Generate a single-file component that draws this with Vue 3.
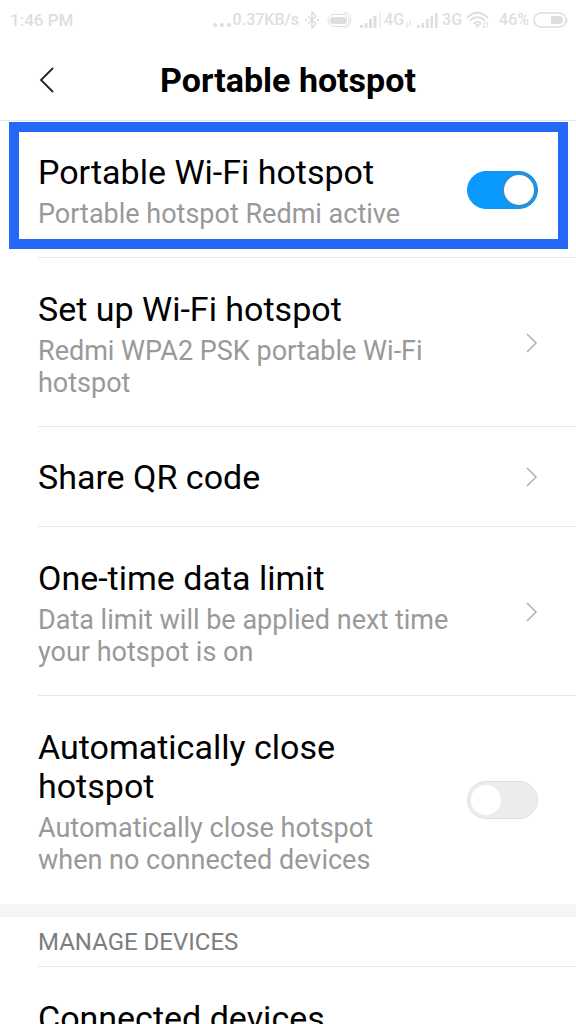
<script setup>
import { ref } from 'vue'

const hotspotOn = ref(true)
const autoClose = ref(false)
const bars = [3, 5, 9, 12, 15]
</script>

<template>
  <div class="screen">
    <div class="status">
      <span class="clock">1:46 PM</span>
      <span class="dots"><i></i><i></i><i></i></span>
      <span class="speed">0.37KB/s</span>
      <svg class="bt" width="14" height="18" viewBox="0 0 14 18" aria-hidden="true">
        <path d="M3 5l8 8-4 4V1l4 4-8 8" fill="none" stroke="currentColor" stroke-width="1.5" />
        <path d="M0 8h2v2H0zM12 8h2v2h-2z" fill="currentColor" />
      </svg>
      <svg class="vibrate" width="25" height="18" viewBox="0 0 25 18" aria-hidden="true">
        <rect x="3" y="6" width="17" height="7" rx="3" fill="currentColor" />
        <rect x="1" y="3.500" width="21" height="12" rx="6" fill="none" stroke="currentColor" />
        <path d="M17 1.500c9 0 9 15 0 15" fill="none" stroke="currentColor" />
      </svg>
      <svg class="signal" width="18" height="18" viewBox="0 0 18 18" aria-hidden="true">
        <rect v-for="(h, i) in bars.slice(0, 4)" :key="h" :x="i * 4.500" :y="17 - h" width="3" :height="h" fill="currentColor" />
      </svg>
      <svg class="divider" width="2" height="18" viewBox="0 0 2 18" aria-hidden="true">
        <path d="M1 1v15" stroke="currentColor" />
      </svg>
      <span class="net first">4G</span>
      <svg class="mini" width="6" height="18" viewBox="0 0 6 18" aria-hidden="true">
        <path d="M1 11v5M4 10v5M0 15l2 2M3 12l2-2" fill="none" stroke="currentColor" />
      </svg>
      <svg class="signal" width="21" height="18" viewBox="0 0 21 18" aria-hidden="true">
        <rect v-for="(h, i) in bars" :key="h" :x="i * 4.500" :y="17 - h" width="2.500" :height="h" fill="currentColor" />
      </svg>
      <span class="net">3G</span>
      <svg class="wifi" width="24" height="18" viewBox="0 0 24 18" aria-hidden="true">
        <path d="M1 7c6-7 15-7 21 0M4 10c4-5 11-5 15 0M7.500 13c3-3 5-3 8 0" fill="none" stroke="currentColor" stroke-width="2" />
        <path d="M9 14q2.500-2 5 0l-2.500 3z" fill="currentColor" />
        <path d="M18 11v6M21 17v-6M17 15l1 2M20 13l1-2" fill="none" stroke="currentColor" />
      </svg>
      <span class="percent">46%</span>
      <svg class="battery" width="35" height="18" viewBox="0 0 35 18" aria-hidden="true">
        <rect x="1" y="2" width="32" height="14" rx="7" fill="none" stroke="currentColor" stroke-width="1.500" />
        <path d="M18 5h8q4 0 4 4T26 13h-8z" fill="currentColor" />
        <path d="M34 7v5" stroke="currentColor" />
      </svg>
    </div>

    <header class="header">
      <button class="back" type="button" aria-label="Back">
        <svg width="16" height="28" viewBox="0 0 16 28" aria-hidden="true">
          <path d="M15 2L3 14l12 12" fill="none" stroke="#222" stroke-width="1.800" />
        </svg>
      </button>
      <h1>Portable hotspot</h1>
    </header>

    <main>
      <label class="row highlighted">
        <span class="text">
          <span class="title">Portable Wi-Fi hotspot</span>
          <span class="summary">Portable hotspot Redmi active</span>
        </span>
        <input v-model="hotspotOn" class="switch" type="checkbox" role="switch" />
      </label>

      <button class="row" type="button">
        <span class="text">
          <span class="title">Set up Wi-Fi hotspot</span>
          <span class="summary">Redmi WPA2 PSK portable Wi-Fi hotspot</span>
        </span>
        <svg class="chevron" width="12" height="22" viewBox="0 0 12 22" aria-hidden="true"><path d="M1 2l9 9-9 9" /></svg>
      </button>

      <button class="row" type="button">
        <span class="text single"><span class="title">Share QR code</span></span>
        <svg class="chevron" width="12" height="22" viewBox="0 0 12 22" aria-hidden="true"><path d="M1 2l9 9-9 9" /></svg>
      </button>

      <button class="row" type="button">
        <span class="text">
          <span class="title">One-time data limit</span>
          <span class="summary">Data limit will be applied next time your hotspot is on</span>
        </span>
        <svg class="chevron" width="12" height="22" viewBox="0 0 12 22" aria-hidden="true"><path d="M1 2l9 9-9 9" /></svg>
      </button>

      <label class="row last">
        <span class="text narrow">
          <span class="title">Automatically close hotspot</span>
          <span class="summary">Automatically close hotspot when no connected devices</span>
        </span>
        <input v-model="autoClose" class="switch" type="checkbox" role="switch" />
      </label>

      <h2>Manage devices</h2>
      <button class="row last" type="button">
        <span class="text"><span class="title">Connected devices</span></span>
      </button>
    </main>
  </div>
</template>

<style>
body {
  margin: 0;
  background: #fff;
}
</style>

<style scoped>
.screen {
  height: 100vh;
  overflow: hidden;
  background: #fff;
  color: #000;
  font-family: Roboto, "Noto Sans", sans-serif;
}
.status {
  display: flex;
  align-items: center;
  height: 40px;
  padding: 0 8px 0 10px;
  box-sizing: border-box;
  color: #dedede;
  font-size: 16px;
  font-weight: 500;
  line-height: 20px;
  white-space: nowrap;
}
.status svg {
  flex: none;
}
.clock {
  margin-right: auto;
  font-size: 17px;
}
.dots {
  display: flex;
  gap: 3px;
  margin: 10px 2px 0 0;
}
.dots i {
  width: 4px;
  height: 4px;
  border-radius: 50%;
  background: currentColor;
}
.bt {
  margin: 0 8px 0 6px;
}
.vibrate {
  margin-right: 8px;
}
.divider {
  margin: 0 3px 0 1px;
}
.mini {
  margin: 0 5px 0 2px;
}
.signal + .net {
  margin: 0 4px;
}
.percent {
  margin: 0 4px 0 9px;
}
.header {
  display: grid;
  grid-template-columns: 76px 1fr 76px;
  align-items: center;
  height: 81px;
  box-sizing: border-box;
  border-bottom: 1px solid #e6e8ea;
}
.back {
  display: flex;
  width: 32px;
  padding: 4px 0;
  margin-left: 38px;
  border: 0;
  background: none;
}
h1 {
  margin: 0;
  font-size: 34px;
  font-weight: 700;
  line-height: 40px;
  text-align: center;
  white-space: nowrap;
}
.row {
  position: relative;
  display: flex;
  align-items: center;
  justify-content: space-between;
  width: 100%;
  box-sizing: border-box;
  padding: 0 38px;
  border: 0;
  background: none;
  color: inherit;
  font: inherit;
  text-align: left;
}
.row:not(.last)::before {
  content: "";
  position: absolute;
  left: 38px;
  right: 0;
  bottom: 0;
  height: 1px;
  background: #e8e8e8;
}
.highlighted::after {
  content: "";
  position: absolute;
  inset: 1px 8px 9px 9px;
  border: 10px solid #2468f8;
  pointer-events: none;
}
.text {
  flex: 0 1 420px;
  padding: 32px 0 28px;
}
.text.single {
  padding: 31px 0 30px;
}
.text.narrow {
  flex-basis: 360px;
}
.title,
.summary {
  display: block;
}
.title {
  font-size: 34px;
  line-height: 39px;
}
.summary {
  margin-top: 6px;
  color: #999;
  font-size: 27px;
  line-height: 32px;
}
.chevron {
  flex: none;
  fill: none;
  stroke: #b4b4b4;
  stroke-width: 1.6;
}
.switch {
  appearance: none;
  flex: none;
  width: 71px;
  height: 38px;
  margin: 0;
  padding: 3px;
  box-sizing: border-box;
  border: 1px solid #e0e0e0;
  border-radius: 19px;
  background: #ececec;
}
.switch::before {
  content: "";
  display: block;
  width: 30px;
  height: 30px;
  border-radius: 50%;
  background: #fff;
}
.switch:checked {
  border-color: #0c97f5;
  background: #0a99ff;
}
.switch:checked::before {
  margin-left: auto;
  box-shadow: 0 0 0 3px #2b8fd8;
}
h2 {
  position: relative;
  margin: 0;
  padding: 9px 38px 8px;
  border-top: 13px solid #f5f5f5;
  color: #7d7d7d;
  font-size: 24px;
  font-weight: 400;
  line-height: 33px;
  text-transform: uppercase;
}
h2::after {
  content: "";
  position: absolute;
  left: 38px;
  right: 0;
  bottom: 0;
  height: 1px;
  background: #e8e8e8;
}
</style>
